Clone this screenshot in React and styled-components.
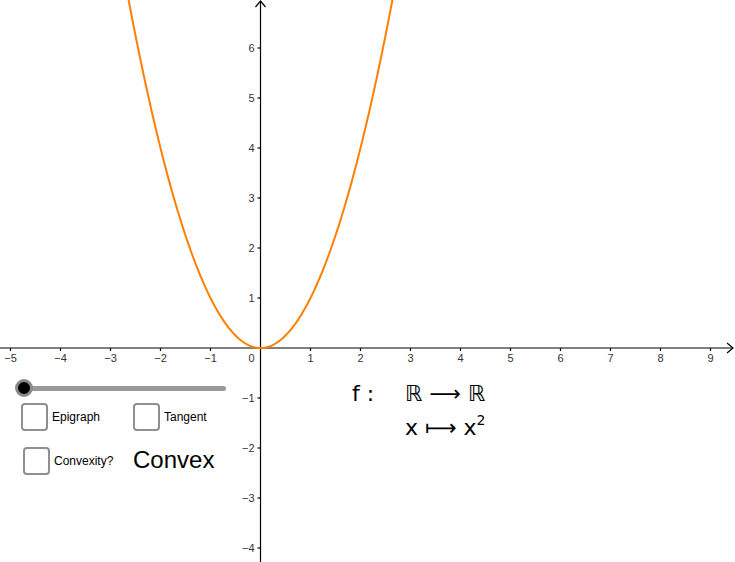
import React from 'react';
import styled, { createGlobalStyle } from 'styled-components';

const GlobalStyle = createGlobalStyle`
  html, body {
    margin: 0;
    padding: 0;
    background: #ffffff;
    overflow: hidden;
  }
  body {
    font-family: "Liberation Sans", Arial, sans-serif;
  }
`;

const Applet = styled.div`
  position: relative;
  width: 735px;
  height: 562px;
  background: #ffffff;
  overflow: hidden;
`;

const Graph = styled.svg`
  display: block;
  width: 735px;
  height: 562px;
`;

const Controls = styled.div`
  position: absolute;
  left: 14px;
  top: 378px;
  width: 230px;
  display: flex;
  flex-direction: column;
  gap: 5px;
`;

const SliderTrack = styled.div`
  position: relative;
  margin-left: 10px;
  width: 202px;
  height: 20px;
  display: flex;
  align-items: center;

  &::before {
    content: '';
    flex: 1;
    height: 5px;
    border-radius: 3px;
    background: #999999;
  }
`;

const Knob = styled.div`
  position: absolute;
  left: -9px;
  top: 1px;
  width: 12px;
  height: 12px;
  border-radius: 50%;
  background: #000000;
  border: 3px solid #8a8a8a;
`;

const Boxes = styled.div`
  display: grid;
  grid-template-columns: 112px auto;
  row-gap: 16px;
`;

const CheckItem = styled.label`
  display: flex;
  align-items: center;
  gap: ${p => p.$gap}px;
  margin-left: ${p => p.$shift}px;
  font-size: ${p => p.$size}px;
  color: #000000;
`;

const Box = styled.span`
  box-sizing: border-box;
  width: 27px;
  height: 28px;
  border: 2px solid #8f8f8f;
  border-radius: 4px;
  background: #ffffff;
`;

const Status = styled.div`
  font-size: 24px;
  color: #000000;
  align-self: center;
  line-height: 1;
  margin: -3px 0 0 7px;
`;

const Formula = styled.div`
  position: absolute;
  left: 352px;
  top: 378px;
  display: grid;
  grid-template-columns: 53px auto;
  row-gap: 2px;
  font-family: "DejaVu Sans", "Liberation Sans", sans-serif;
  font-size: 22px;
  color: #000000;
  line-height: 32px;
`;

const Sup = styled.sup`
  font-size: 14px;
  vertical-align: 10px;
  line-height: 0;
`;

const OX = 260.5;
const OY = 348;
const U = 50;

const xTicks = [-5, -4, -3, -2, -1, 1, 2, 3, 4, 5, 6, 7, 8, 9];
const yTicks = [-4, -3, -2, -1, 1, 2, 3, 4, 5, 6];

const label = n => (n < 0 ? '\u2212' + Math.abs(n) : String(n));

const parabola = () => {
  const pts = [];
  for (let x = -2.66; x <= 2.661; x += 0.02) {
    pts.push(`${(OX + x * U).toFixed(2)},${(OY - x * x * U).toFixed(2)}`);
  }
  return 'M' + pts.join(' L');
};

const Check = ({ children, shift = 0, size = 12, gap = 4 }) => (
  <CheckItem $shift={shift} $size={size} $gap={gap}>
    <Box />
    <span>{children}</span>
  </CheckItem>
);

const App = () => {
  return (
    <Applet>
      <GlobalStyle />
      <Graph viewBox="0 0 735 562">
        <g stroke="#000" strokeWidth="1.2" fill="none">
          <line x1="0" y1={OY} x2="733" y2={OY} />
          <path d={`M727,${OY - 5} L733,${OY} L727,${OY + 5}`} />
          <line x1={OX} y1="1" x2={OX} y2="562" />
          <path d={`M${OX - 5},7 L${OX},1 L${OX + 5},7`} />
          {xTicks.map(t => (
            <line key={t} x1={OX + t * U} y1={OY} x2={OX + t * U} y2={OY + 3} />
          ))}
          {yTicks.map(t => (
            <line key={t} x1={OX - 3} y1={OY - t * U} x2={OX} y2={OY - t * U} />
          ))}
        </g>
        <g fill="#333" fontSize="11" fontFamily="Liberation Sans, Arial, sans-serif">
          {xTicks.map(t => (
            <text key={t} x={OX + t * U} y={OY + 14} textAnchor="middle">{label(t)}</text>
          ))}
          {yTicks.map(t => (
            <text key={t} x={OX - 6} y={OY - t * U + 4} textAnchor="end">{label(t)}</text>
          ))}
          <text x={OX - 6} y={OY + 14} textAnchor="end">0</text>
        </g>
        <path d={parabola()} stroke="#ff7f00" strokeWidth="2" fill="none" />
      </Graph>

      <Controls>
        <SliderTrack>
          <Knob />
        </SliderTrack>
        <Boxes>
          <Check shift={7}>Epigraph</Check>
          <Check shift={7}>Tangent</Check>
          <Check shift={9} size={12} gap={4}>Convexity?</Check>
          <Status>Convex</Status>
        </Boxes>
      </Controls>

      <Formula>
        <span>f :</span>
        <span>ℝ ⟶ ℝ</span>
        <span />
        <span>x ⟼ x<Sup>2</Sup></span>
      </Formula>
    </Applet>
  );
};

export default App;
